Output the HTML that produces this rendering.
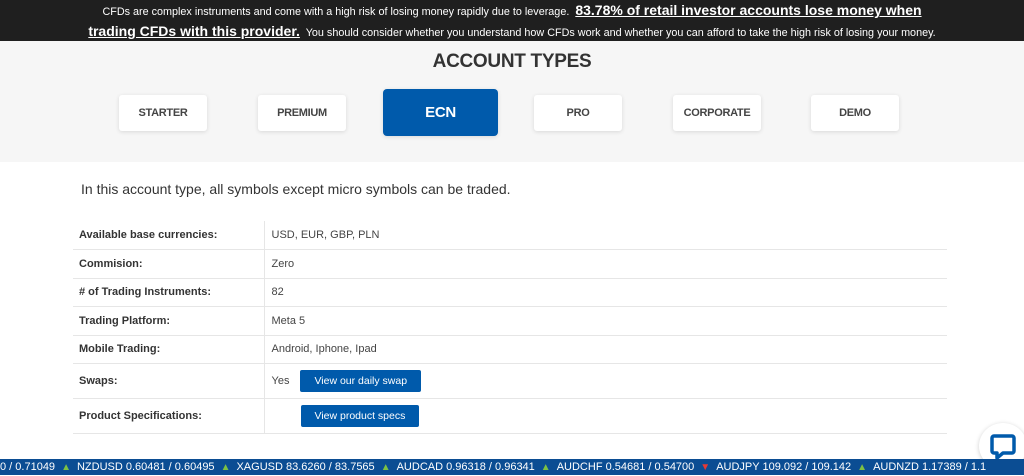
<!DOCTYPE html>
<html><head><meta charset="utf-8"><style>
*{margin:0;padding:0;box-sizing:border-box}
body{width:1024px;height:475px;overflow:hidden;background:#fff;font-family:"Liberation Sans",sans-serif;position:relative}
.top{position:absolute;left:0;top:0;width:1024px;height:41px;background:#1f1f1f;color:#fff;text-align:center;font-size:10.8px;line-height:19px;padding-top:1px}
.top b{font-size:14px;text-decoration:underline}
.grey{position:absolute;left:0;top:41px;width:1024px;height:121px;background:#f6f6f6}
h1{position:absolute;top:51px;left:0;width:1024px;text-align:center;font-size:19px;color:#333;font-weight:bold;letter-spacing:-0.3px}
.tab{position:absolute;top:95px;width:88px;height:36px;background:#fff;border-radius:3px;box-shadow:0 1px 4px rgba(0,0,0,.12);font-size:11px;color:#444;text-align:center;line-height:36px;font-weight:bold;letter-spacing:-0.3px}
.tab.on{top:89px;height:47px;width:115px;background:#005aab;color:#fff;font-size:15px;line-height:47px;border-radius:4px}
.desc{position:absolute;left:81px;top:181px;font-size:14px;color:#333}
table{position:absolute;left:73px;top:221px;width:874px;border-collapse:collapse;font-size:11px;color:#444}
td{border-bottom:1px solid #e6e6e6;height:28.5px;vertical-align:middle}
td:first-child{width:191px;padding-left:6px;font-weight:bold;color:#333;border-right:1px solid #e6e6e6}
td:last-child{padding-left:7px}
.btn{display:inline-block;background:#005aab;color:#fff;border-radius:2px;padding:0 14px;height:22px;line-height:22px;font-size:10.5px;margin-left:11px}
.tick{position:absolute;left:0;top:459px;width:1024px;height:16px;background:#0b4d93;color:#fff;font-size:11px;line-height:16px;white-space:nowrap}
.up{color:#7cc043;font-size:10px;margin:0 6px}
.dn{color:#e53935;font-size:10px;margin:0 6px}
.chat{position:absolute;left:979px;top:423px;width:48px;height:46px;border-radius:50%;background:#fff;box-shadow:0 1px 5px rgba(0,0,0,.2)}
</style></head><body>
<div class="top">CFDs are complex instruments and come with a high risk of losing money rapidly due to leverage. &nbsp;<b>83.78% of retail investor accounts lose money when</b><br><b>trading CFDs with this provider.</b>&nbsp; You should consider whether you understand how CFDs work and whether you can afford to take the high risk of losing your money.</div>
<div class="grey"></div>
<h1>ACCOUNT TYPES</h1>
<div class="tab" style="left:119px">STARTER</div>
<div class="tab" style="left:258px">PREMIUM</div>
<div class="tab on" style="left:383px">ECN</div>
<div class="tab" style="left:534px">PRO</div>
<div class="tab" style="left:673px">CORPORATE</div>
<div class="tab" style="left:811px">DEMO</div>
<div class="desc">In this account type, all symbols except micro symbols can be traded.</div>
<table>
<tr><td>Available base currencies:</td><td>USD, EUR, GBP, PLN</td></tr>
<tr><td>Commision:</td><td>Zero</td></tr>
<tr><td># of Trading Instruments:</td><td>82</td></tr>
<tr><td>Trading Platform:</td><td>Meta 5</td></tr>
<tr><td>Mobile Trading:</td><td>Android, Iphone, Ipad</td></tr>
<tr><td style="height:35px">Swaps:</td><td>Yes<span class="btn">View our daily swap</span></td></tr>
<tr><td style="height:35px">Product Specifications:</td><td><span class="btn" style="margin-left:29px">View product specs</span></td></tr>
</table>
<div class="chat"><svg width="48" height="46" viewBox="0 0 48 46"><path d="M15 13h18a2 2 0 0 1 2 2v13a2 2 0 0 1-2 2h-9l-6 5v-5h-3a2 2 0 0 1-2-2v-13a2 2 0 0 1 2-2z" fill="none" stroke="#005aab" stroke-width="3.5" stroke-linejoin="round"/></svg></div>
<div class="tick">0 / 0.71049<span class="up">▲</span>NZDUSD 0.60481 / 0.60495<span class="up">▲</span>XAGUSD 83.6260 / 83.7565<span class="up">▲</span>AUDCAD 0.96318 / 0.96341<span class="up">▲</span>AUDCHF 0.54681 / 0.54700<span class="dn">▼</span>AUDJPY 109.092 / 109.142<span class="up">▲</span>AUDNZD 1.17389 / 1.1</div>
</body></html>
